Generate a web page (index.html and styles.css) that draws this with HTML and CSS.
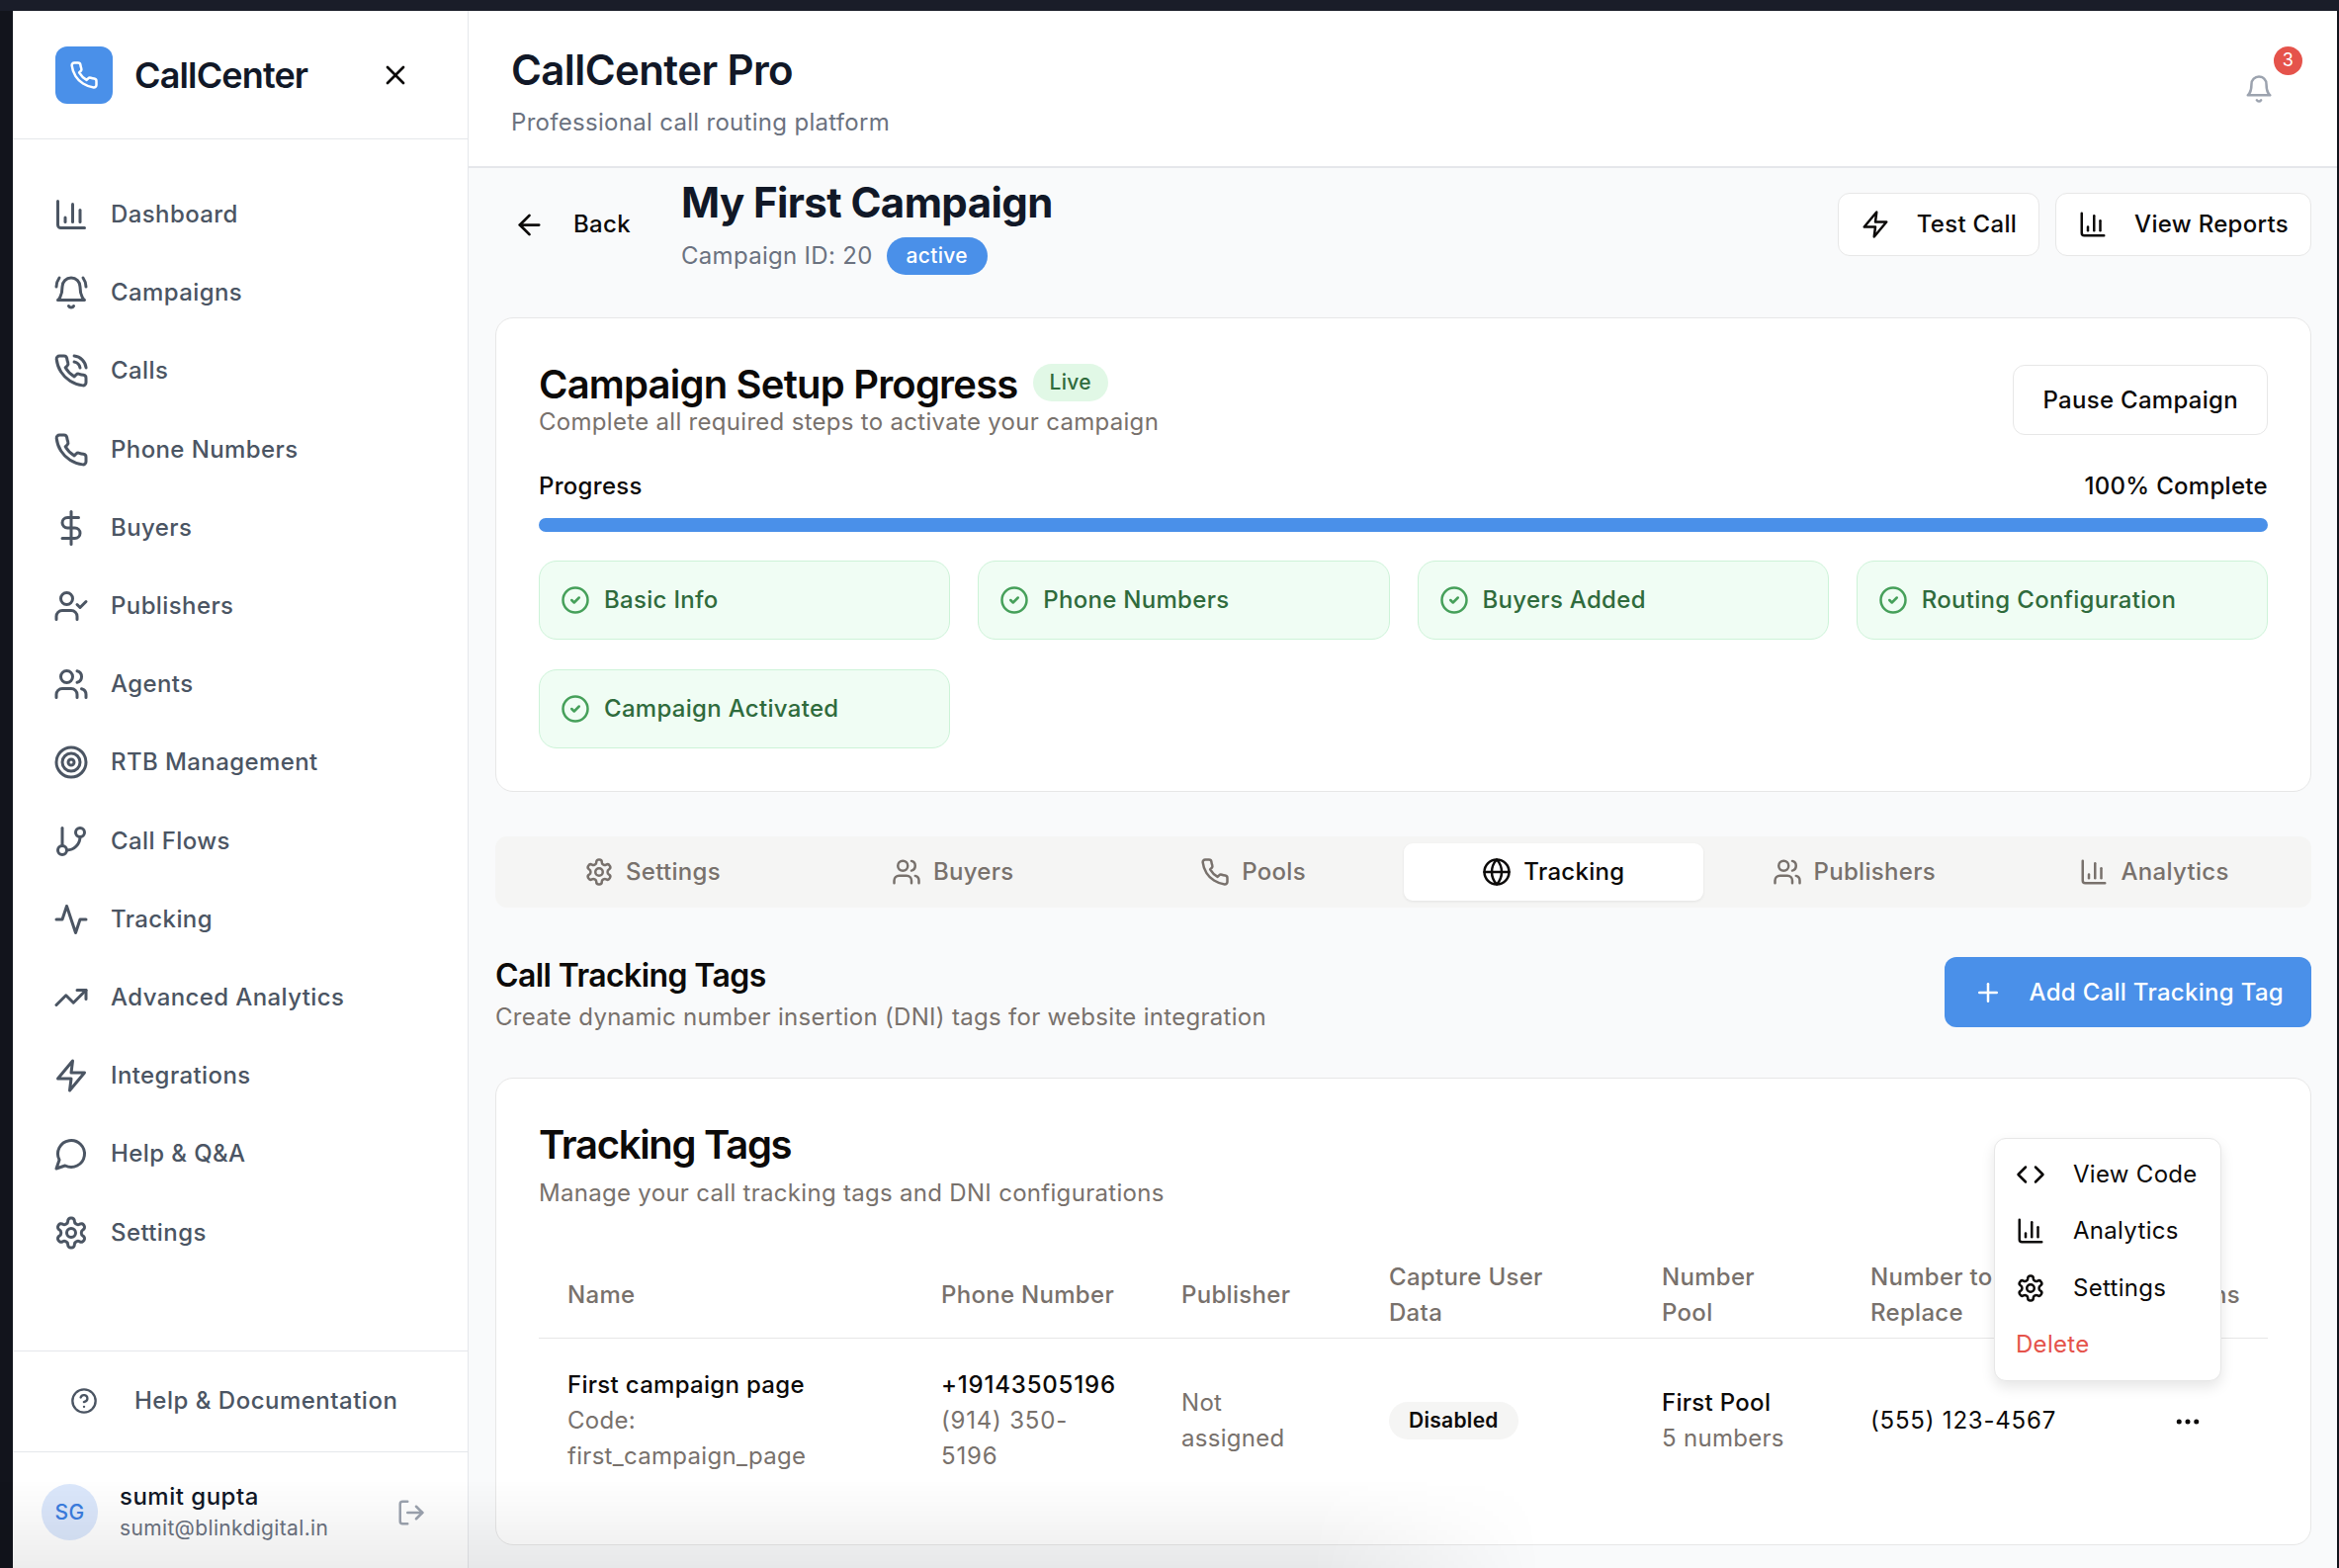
FILE: index.html
```html
<!DOCTYPE html>
<html lang="en">
  <head>
    <meta charset="UTF-8" />
    <title>CallCenter Pro</title>
    <link rel="stylesheet" href="styles.css">
  </head>
  <body>
    <!-- ICON SPRITE -->
    <svg class="sprite" xmlns="http://www.w3.org/2000/svg">
      <symbol id="i-chart" viewBox="0 0 24 24"><path d="M3 3v16a2 2 0 0 0 2 2h16" /><path d="M18 17V9" /><path d="M13 17V5" /><path d="M8 17v-3" /></symbol>
      <symbol id="i-bell-ring" viewBox="0 0 24 24"><path d="M6 8a6 6 0 0 1 12 0c0 7 3 9 3 9H3s3-2 3-9" /><path d="M10.3 21a1.94 1.94 0 0 0 3.4 0" /><path d="M4 2C2.8 3.7 2 5.7 2 8" /><path d="M22 8c0-2.3-.8-4.3-2-6" /></symbol>
      <symbol id="i-bell" viewBox="0 0 24 24"><path d="M6 8a6 6 0 0 1 12 0c0 7 3 9 3 9H3s3-2 3-9" /><path d="M10.3 21a1.94 1.94 0 0 0 3.4 0" /></symbol>
      <symbol id="i-phone" viewBox="0 0 24 24"><path d="M22 16.92v3a2 2 0 0 1-2.18 2 19.79 19.79 0 0 1-8.63-3.07 19.5 19.5 0 0 1-6-6 19.79 19.79 0 0 1-3.07-8.67A2 2 0 0 1 4.11 2h3a2 2 0 0 1 2 1.72 12.84 12.84 0 0 0 .7 2.81 2 2 0 0 1-.45 2.11L8.09 9.91a16 16 0 0 0 6 6l1.27-1.27a2 2 0 0 1 2.11-.45 12.84 12.84 0 0 0 2.81.7A2 2 0 0 1 22 16.92z" /></symbol>
      <symbol id="i-phone-call" viewBox="0 0 24 24"><path d="M22 16.92v3a2 2 0 0 1-2.18 2 19.79 19.79 0 0 1-8.63-3.07 19.5 19.5 0 0 1-6-6 19.79 19.79 0 0 1-3.07-8.67A2 2 0 0 1 4.11 2h3a2 2 0 0 1 2 1.72 12.84 12.84 0 0 0 .7 2.81 2 2 0 0 1-.45 2.11L8.09 9.91a16 16 0 0 0 6 6l1.27-1.27a2 2 0 0 1 2.11-.45 12.84 12.84 0 0 0 2.81.7A2 2 0 0 1 22 16.92z" /><path d="M14.05 2a9 9 0 0 1 8 7.94" /><path d="M14.05 6A5 5 0 0 1 18 10" /></symbol>
      <symbol id="i-dollar" viewBox="0 0 24 24"><path d="M12 1v22" /><path d="M17 5H9.5a3.5 3.5 0 0 0 0 7h5a3.5 3.5 0 0 1 0 7H6" /></symbol>
      <symbol id="i-user-check" viewBox="0 0 24 24"><path d="M16 21v-2a4 4 0 0 0-4-4H6a4 4 0 0 0-4 4v2" /><circle cx="9" cy="7" r="4" /><path d="m16 11 2 2 4-4" /></symbol>
      <symbol id="i-users" viewBox="0 0 24 24"><path d="M16 21v-2a4 4 0 0 0-4-4H6a4 4 0 0 0-4 4v2" /><circle cx="9" cy="7" r="4" /><path d="M22 21v-2a4 4 0 0 0-3-3.87" /><path d="M16 3.13a4 4 0 0 1 0 7.75" /></symbol>
      <symbol id="i-target" viewBox="0 0 24 24"><circle cx="12" cy="12" r="10" /><circle cx="12" cy="12" r="6" /><circle cx="12" cy="12" r="2" /></symbol>
      <symbol id="i-branch" viewBox="0 0 24 24"><path d="M6 3v12" /><circle cx="18" cy="6" r="3" /><circle cx="6" cy="18" r="3" /><path d="M18 9a9 9 0 0 1-9 9" /></symbol>
      <symbol id="i-activity" viewBox="0 0 24 24"><path d="M22 12h-4l-3 9L9 3l-3 9H2" /></symbol>
      <symbol id="i-trending" viewBox="0 0 24 24"><path d="m22 7-8.5 8.5-5-5L2 17" /><path d="M16 7h6v6" /></symbol>
      <symbol id="i-zap" viewBox="0 0 24 24"><path d="M13 2 3 14h9l-1 8 10-12h-9l1-8z" /></symbol>
      <symbol id="i-message" viewBox="0 0 24 24"><path d="M7.9 20A9 9 0 1 0 4 16.1L2 22Z" /></symbol>
      <symbol id="i-gear" viewBox="0 0 24 24"><path d="M12.22 2h-.44a2 2 0 0 0-2 2v.18a2 2 0 0 1-1 1.73l-.43.25a2 2 0 0 1-2 0l-.15-.08a2 2 0 0 0-2.73.73l-.22.38a2 2 0 0 0 .73 2.73l.15.1a2 2 0 0 1 1 1.72v.51a2 2 0 0 1-1 1.74l-.15.09a2 2 0 0 0-.73 2.73l.22.38a2 2 0 0 0 2.73.73l.15-.08a2 2 0 0 1 2 0l.43.25a2 2 0 0 1 1 1.73V20a2 2 0 0 0 2 2h.44a2 2 0 0 0 2-2v-.18a2 2 0 0 1 1-1.73l.43-.25a2 2 0 0 1 2 0l.15.08a2 2 0 0 0 2.73-.73l.22-.39a2 2 0 0 0-.73-2.73l-.15-.08a2 2 0 0 1-1-1.74v-.5a2 2 0 0 1 1-1.74l.15-.09a2 2 0 0 0 .73-2.73l-.22-.38a2 2 0 0 0-2.73-.73l-.15.08a2 2 0 0 1-2 0l-.43-.25a2 2 0 0 1-1-1.73V4a2 2 0 0 0-2-2z" /><circle cx="12" cy="12" r="3" /></symbol>
      <symbol id="i-help" viewBox="0 0 24 24"><circle cx="12" cy="12" r="10" /><path d="M9.09 9a3 3 0 0 1 5.83 1c0 2-3 3-3 3" /><path d="M12 17h.01" /></symbol>
      <symbol id="i-logout" viewBox="0 0 24 24"><path d="M9 21H5a2 2 0 0 1-2-2V5a2 2 0 0 1 2-2h4" /><path d="m16 17 5-5-5-5" /><path d="M21 12H9" /></symbol>
      <symbol id="i-x" viewBox="0 0 24 24"><path d="M18 6 6 18" /><path d="m6 6 12 12" /></symbol>
      <symbol id="i-back" viewBox="0 0 24 24"><path d="m12 19-7-7 7-7" /><path d="M19 12H5" /></symbol>
      <symbol id="i-check" viewBox="0 0 24 24"><circle cx="12" cy="12" r="10" /><path d="m9 12 2 2 4-4" /></symbol>
      <symbol id="i-globe" viewBox="0 0 24 24"><circle cx="12" cy="12" r="10" /><path d="M12 2a14.5 14.5 0 0 0 0 20 14.5 14.5 0 0 0 0-20" /><path d="M2 12h20" /></symbol>
      <symbol id="i-plus" viewBox="0 0 24 24"><path d="M5 12h14" /><path d="M12 5v14" /></symbol>
      <symbol id="i-code" viewBox="0 0 24 24"><path d="m16 18 6-6-6-6" /><path d="m8 6-6 6 6 6" /></symbol>
      <symbol id="i-dots" viewBox="0 0 24 24"><circle cx="12" cy="12" r="1" /><circle cx="19" cy="12" r="1" /><circle cx="5" cy="12" r="1" /></symbol>
    </svg>

    <div class="topbar"></div>

    <div class="shell">
      <!-- SIDEBAR -->
      <aside class="sidebar">
        <div class="brand">
          <span class="brand-logo"><svg class="icon brand-icon"><use href="#i-phone" /></svg></span>
          <span class="brand-name">CallCenter</span>
          <svg class="icon brand-close"><use href="#i-x" /></svg>
        </div>

        <nav class="nav">
          <a class="nav-item"><svg class="icon"><use href="#i-chart" /></svg>Dashboard</a>
          <a class="nav-item"><svg class="icon"><use href="#i-bell-ring" /></svg>Campaigns</a>
          <a class="nav-item"><svg class="icon"><use href="#i-phone-call" /></svg>Calls</a>
          <a class="nav-item"><svg class="icon"><use href="#i-phone" /></svg>Phone Numbers</a>
          <a class="nav-item"><svg class="icon"><use href="#i-dollar" /></svg>Buyers</a>
          <a class="nav-item"><svg class="icon"><use href="#i-user-check" /></svg>Publishers</a>
          <a class="nav-item"><svg class="icon"><use href="#i-users" /></svg>Agents</a>
          <a class="nav-item"><svg class="icon"><use href="#i-target" /></svg>RTB Management</a>
          <a class="nav-item"><svg class="icon"><use href="#i-branch" /></svg>Call Flows</a>
          <a class="nav-item"><svg class="icon"><use href="#i-activity" /></svg>Tracking</a>
          <a class="nav-item"><svg class="icon"><use href="#i-trending" /></svg>Advanced Analytics</a>
          <a class="nav-item"><svg class="icon"><use href="#i-zap" /></svg>Integrations</a>
          <a class="nav-item"><svg class="icon"><use href="#i-message" /></svg>Help &amp; Q&amp;A</a>
          <a class="nav-item"><svg class="icon"><use href="#i-gear" /></svg>Settings</a>
        </nav>

        <a class="help-link"><svg class="icon"><use href="#i-help" /></svg>Help &amp; Documentation</a>

        <div class="user">
          <span class="avatar">SG</span>
          <div class="user-info">
            <div class="user-name">sumit gupta</div>
            <div class="user-mail">sumit@blinkdigital.in</div>
          </div>
          <svg class="icon user-logout"><use href="#i-logout" /></svg>
        </div>
      </aside>

      <!-- MAIN -->
      <div class="main">
        <header class="app-header">
          <div class="app-heading">
            <div class="app-title">CallCenter Pro</div>
            <div class="app-sub">Professional call routing platform</div>
          </div>
          <div class="notify">
            <svg class="icon"><use href="#i-bell" /></svg>
            <span class="notify-count">3</span>
          </div>
        </header>

        <main class="content">
          <div class="page-head">
            <a class="back"><svg class="icon"><use href="#i-back" /></svg>Back</a>
            <div class="page-title">
              <h1>My First Campaign</h1>
              <div class="page-meta">Campaign ID: 20 <span class="pill pill-blue">active</span></div>
            </div>
            <div class="page-actions">
              <button class="btn"><svg class="icon"><use href="#i-zap" /></svg>Test Call</button>
              <button class="btn"><svg class="icon"><use href="#i-chart" /></svg>View Reports</button>
            </div>
          </div>

          <!-- SETUP PROGRESS -->
          <section class="card setup">
            <div class="setup-head">
              <div>
                <div class="setup-title"><h2>Campaign Setup Progress</h2><span class="pill pill-green">Live</span></div>
                <p class="muted">Complete all required steps to activate your campaign</p>
              </div>
              <button class="btn btn-pause">Pause Campaign</button>
            </div>
            <div class="progress-label"><span>Progress</span><span>100% Complete</span></div>
            <div class="progress-bar"></div>
            <div class="steps">
              <div class="step"><svg class="icon"><use href="#i-check" /></svg>Basic Info</div>
              <div class="step"><svg class="icon"><use href="#i-check" /></svg>Phone Numbers</div>
              <div class="step"><svg class="icon"><use href="#i-check" /></svg>Buyers Added</div>
              <div class="step"><svg class="icon"><use href="#i-check" /></svg>Routing Configuration</div>
              <div class="step"><svg class="icon"><use href="#i-check" /></svg>Campaign Activated</div>
            </div>
          </section>

          <!-- TABS -->
          <div class="tabs">
            <a class="tab"><svg class="icon"><use href="#i-gear" /></svg>Settings</a>
            <a class="tab"><svg class="icon"><use href="#i-users" /></svg>Buyers</a>
            <a class="tab"><svg class="icon"><use href="#i-phone" /></svg>Pools</a>
            <a class="tab tab-active"><svg class="icon"><use href="#i-globe" /></svg>Tracking</a>
            <a class="tab"><svg class="icon"><use href="#i-users" /></svg>Publishers</a>
            <a class="tab"><svg class="icon"><use href="#i-chart" /></svg>Analytics</a>
          </div>

          <div class="section-head">
            <div>
              <h3>Call Tracking Tags</h3>
              <p class="muted">Create dynamic number insertion (DNI) tags for website integration</p>
            </div>
            <button class="btn btn-primary"><svg class="icon"><use href="#i-plus" /></svg>Add Call Tracking Tag</button>
          </div>

          <!-- TRACKING TAGS TABLE -->
          <section class="card tags">
            <h2>Tracking Tags</h2>
            <p class="muted tags-sub">Manage your call tracking tags and DNI configurations</p>
            <table class="tags-table">
              <colgroup>
                <col class="col-name" /><col class="col-phone" /><col class="col-pub" /><col class="col-capture" /><col class="col-pool" /><col class="col-replace" /><col />
              </colgroup>
              <thead>
                <tr>
                  <th>Name</th>
                  <th>Phone Number</th>
                  <th>Publisher</th>
                  <th>Capture User<br />Data</th>
                  <th>Number<br />Pool</th>
                  <th>Number to<br />Replace</th>
                  <th class="cell-right">Actions</th>
                </tr>
              </thead>
              <tbody>
                <tr>
                  <td><div class="strong">First campaign page</div><div class="muted">Code:<br />first_campaign_page</div></td>
                  <td class="nums"><div class="strong">+19143505196</div><div class="muted">(914) 350-<br />5196</div></td>
                  <td class="muted">Not<br />assigned</td>
                  <td><span class="pill pill-grey">Disabled</span></td>
                  <td><div class="strong">First Pool</div><div class="muted">5 numbers</div></td>
                  <td class="nums">(555) 123-4567</td>
                  <td class="cell-right"><svg class="icon row-dots"><use href="#i-dots" /></svg></td>
                </tr>
              </tbody>
            </table>

            <div class="menu">
              <a class="menu-item"><svg class="icon"><use href="#i-code" /></svg>View Code</a>
              <a class="menu-item"><svg class="icon"><use href="#i-chart" /></svg>Analytics</a>
              <a class="menu-item"><svg class="icon"><use href="#i-gear" /></svg>Settings</a>
              <a class="menu-item menu-danger">Delete</a>
            </div>
          </section>
        </main>
      </div>
    </div>

    <div class="bottom-shade"></div>
  </body>
</html>
```

FILE: styles.css
```css
/* RESET */
*,
*::before,
*::after {
  box-sizing: border-box;
}
html,
body {
  margin: 0;
  height: 100%;
  overflow: hidden;
}
body {
  display: flex;
  flex-direction: column;
  position: relative;
  font-family: Inter, "Noto Sans", sans-serif;
  font-size: 24px;
  line-height: 36px;
  letter-spacing: 0.3px;
  color: #0c0a09;
  background: #12141c;
}
h1,
h2,
h3,
p {
  margin: 0;
}
.sprite {
  display: none;
}
.icon {
  flex: none;
  width: 30px;
  height: 30px;
  fill: none;
  stroke: currentColor;
  stroke-width: 2;
  stroke-linecap: round;
  stroke-linejoin: round;
}
.muted {
  color: #78716c;
}

/* WINDOW FRAME */
.topbar {
  flex: none;
  height: 11px;
  background: #1a1d29;
}
.shell {
  flex: 1;
  display: flex;
  min-height: 0;
  padding-left: 13px;
  padding-right: 2px;
}

/* SIDEBAR */
.sidebar {
  flex: none;
  width: 461px;
  display: flex;
  flex-direction: column;
  background: #fff;
  border-right: 1px solid #e5e7eb;
}
.brand {
  flex: none;
  height: 130px;
  display: flex;
  align-items: center;
  padding-left: 43px;
  border-bottom: 1px solid #e5e7eb;
}
.brand-logo {
  width: 58px;
  height: 58px;
  display: flex;
  align-items: center;
  justify-content: center;
  border-radius: 12px;
  background: #4a90e9;
  color: #fff;
}
.brand-name {
  width: 248px;
  margin-left: 22px;
  font-size: 36px;
  font-weight: 600;
  letter-spacing: -0.85px;
  color: #111827;
}
.brand-close {
  width: 32px;
  height: 32px;
  color: #0c0a09;
}
.nav {
  flex: 1;
  padding-top: 36.5px;
}
.nav-item {
  height: 79.2px;
  display: flex;
  align-items: center;
  gap: 22px;
  padding-left: 41px;
  font-weight: 500;
  letter-spacing: 0.4px;
  color: #4b5563;
}
.nav-item .icon {
  width: 36px;
  height: 36px;
}
.help-link {
  flex: none;
  height: 102px;
  display: flex;
  align-items: center;
  gap: 37px;
  padding: 0 0 2px 58px;
  font-weight: 500;
  letter-spacing: 0.5px;
  color: #4b5563;
  border-top: 1px solid #e5e7eb;
}
.help-link .icon {
  width: 28px;
  height: 28px;
}
.user {
  flex: none;
  height: 118px;
  display: flex;
  align-items: center;
  padding: 4px 0 0 29px;
  border-top: 1px solid #e5e7eb;
}
.avatar {
  width: 57px;
  height: 57px;
  display: flex;
  align-items: center;
  justify-content: center;
  border-radius: 50%;
  background: #dbe7fb;
  color: #3b7de0;
  font-size: 21px;
  font-weight: 500;
}
.user-info {
  width: 280px;
  margin-left: 22px;
}
.user-name {
  font-weight: 500;
  line-height: 32px;
  letter-spacing: 0.5px;
  color: #111827;
}
.user-mail {
  font-size: 21px;
  line-height: 32px;
  letter-spacing: 0.35px;
  color: #6b7280;
}
.user-logout {
  color: #9ca3af;
}

/* MAIN */
.main {
  flex: 1;
  min-width: 0;
  display: flex;
  flex-direction: column;
  background: #f9fafb;
}
.app-header {
  flex: none;
  height: 159px;
  display: flex;
  align-items: center;
  justify-content: space-between;
  padding: 0 49px 0 43px;
  background: #fff;
  border-bottom: 2px solid #e5e7eb;
}
.app-heading {
  margin-top: 6px;
}
.app-title {
  font-size: 42px;
  line-height: 54px;
  font-weight: 600;
  letter-spacing: -0.6px;
  color: #111827;
}
.app-sub {
  margin-top: 8px;
  color: #6b7280;
}
.notify {
  position: relative;
  width: 60px;
  height: 60px;
  display: flex;
  align-items: center;
  justify-content: center;
  color: #9ca3af;
}
.notify-count {
  position: absolute;
  top: -13px;
  right: -14px;
  width: 29px;
  height: 29px;
  display: flex;
  align-items: center;
  justify-content: center;
  border-radius: 50%;
  background: #e5534b;
  color: #fff;
  font-size: 18px;
  line-height: 1;
}
.content {
  flex: 1;
  min-height: 0;
  padding: 8px 26px 0 27px;
}

/* PAGE HEAD */
.page-head {
  display: flex;
  align-items: center;
}
.back {
  display: flex;
  align-items: center;
  gap: 28px;
  padding-left: 18px;
  margin-bottom: 2px;
  width: 188px;
  font-weight: 500;
}
.back .icon {
  width: 33px;
  height: 33px;
}
.page-title {
  flex: 1;
}
h1 {
  font-size: 42px;
  line-height: 54px;
  font-weight: 700;
  letter-spacing: -0.6px;
  color: #111827;
}
.page-meta {
  display: flex;
  align-items: center;
  gap: 14px;
  margin-top: 8px;
  color: #6b7280;
}
.page-actions {
  display: flex;
  gap: 16px;
  margin-bottom: 2px;
}
.pill {
  display: inline-flex;
  align-items: center;
  height: 38px;
  padding: 0 20px;
  border-radius: 19px;
  font-size: 21px;
  font-weight: 500;
}
.pill-blue {
  background: #4a90e9;
  color: #fff;
}
.pill-green {
  padding: 0 17px;
  background: #e1f8e6;
  color: #2f6b3c;
}
.pill-grey {
  background: #f5f5f4;
  font-weight: 600;
}
.btn {
  display: inline-flex;
  align-items: center;
  gap: 27px;
  height: 64px;
  padding: 0 22px;
  font: inherit;
  font-weight: 500;
  letter-spacing: inherit;
  color: #0c0a09;
  background: #fff;
  border: 1px solid #e7e7e7;
  border-radius: 12px;
}
.btn-pause {
  height: 71px;
  padding: 0 29px;
}
.btn-primary {
  height: 71px;
  margin-top: 2px;
  padding: 0 28px 0 29px;
  color: #fff;
  background: #4a90e9;
  border: 0;
}

/* CARDS */
.card {
  background: #fff;
  border: 1px solid #e7e7e7;
  border-radius: 18px;
}
.setup {
  margin-top: 43px;
  padding: 47px 43px 43px;
}
.setup-head {
  display: flex;
  justify-content: space-between;
  align-items: flex-start;
}
.setup-title {
  display: flex;
  align-items: center;
  gap: 15px;
  height: 40px;
}
h2 {
  font-size: 40px;
  line-height: 54px;
  font-weight: 600;
  letter-spacing: -0.8px;
}
.tags h2 {
  letter-spacing: -1.3px;
}
.setup-title .pill {
  margin-bottom: 4px;
}
.progress-label {
  display: flex;
  justify-content: space-between;
  margin-top: 29px;
  font-weight: 500;
}
.progress-bar {
  height: 14px;
  margin-top: 14px;
  border-radius: 7px;
  background: #4a90e9;
}
.steps {
  display: grid;
  grid-template-columns: repeat(4, 1fr);
  gap: 30px 28px;
  margin-top: 29px;
}
.step {
  height: 80px;
  display: flex;
  align-items: center;
  gap: 14px;
  padding-left: 21px;
  font-weight: 500;
  color: #2f6b3c;
  background: #f0fdf4;
  border: 1px solid #cdf3d8;
  border-radius: 18px;
}
.step .icon {
  color: #46a05a;
}

/* TABS */
.tabs {
  display: grid;
  grid-template-columns: repeat(6, 1fr);
  height: 72px;
  margin-top: 45px;
  padding: 7px;
  border-radius: 12px;
  background: #f5f5f4;
}
.tab {
  display: flex;
  align-items: center;
  justify-content: center;
  gap: 12px;
  border-radius: 9px;
  font-weight: 500;
  color: #78716c;
}
.tab-active {
  color: #0c0a09;
  background: #fff;
  box-shadow: 0 1px 3px rgba(0, 0, 0, 0.08);
}

/* SECTION HEAD */
.section-head {
  display: flex;
  justify-content: space-between;
  align-items: flex-start;
  margin-top: 48px;
}
h3 {
  font-size: 32px;
  line-height: 42px;
  font-weight: 600;
  letter-spacing: -0.6px;
}
.section-head .muted {
  margin-top: 3px;
}

/* TAGS TABLE */
.tags {
  position: relative;
  margin-top: 43px;
  padding: 40px 43px 42px;
}
.tags-sub {
  margin-top: 4px;
}
.tags-table {
  width: 100%;
  margin-top: 42px;
  border-collapse: collapse;
  table-layout: fixed;
}
.col-name {
  width: 378px;
}
.col-phone {
  width: 243px;
}
.col-pub {
  width: 210px;
}
.col-capture {
  width: 276px;
}
.col-pool {
  width: 211px;
}
.col-replace {
  width: 270px;
}
th {
  padding: 7px 29px;
  text-align: left;
  font-weight: 500;
  color: #78716c;
  border-bottom: 1px solid #e7e7e7;
}
td {
  padding: 29px 29px;
  vertical-align: middle;
}
td.nums {
  letter-spacing: 0.8px;
}
.strong {
  font-weight: 500;
}
th.cell-right,
td.cell-right {
  text-align: right;
  padding-right: 28px;
  padding-left: 0;
}
.row-dots {
  display: inline-block;
  vertical-align: middle;
  margin-right: 38px;
}

/* ROW MENU */
.menu {
  position: absolute;
  top: 60px;
  right: 90px;
  width: 230px;
  padding: 7px 0;
  background: #fff;
  border: 1px solid #e7e7e7;
  border-radius: 12px;
  box-shadow: 0 6px 14px rgba(0, 0, 0, 0.1);
}
.menu-item {
  height: 57.5px;
  display: flex;
  align-items: center;
  gap: 28px;
  padding-left: 21px;
}
.menu-danger {
  color: #e5534b;
}

/* DOCK SHADOW ALONG THE BOTTOM */
.bottom-shade {
  position: absolute;
  left: 0;
  bottom: 0;
  width: 1560px;
  height: 90px;
  pointer-events: none;
  background: linear-gradient(to bottom, rgba(0, 0, 0, 0), rgba(0, 0, 0, 0.07));
  -webkit-mask-image: linear-gradient(to right, #000 85%, transparent);
  mask-image: linear-gradient(to right, #000 85%, transparent);
}
```
